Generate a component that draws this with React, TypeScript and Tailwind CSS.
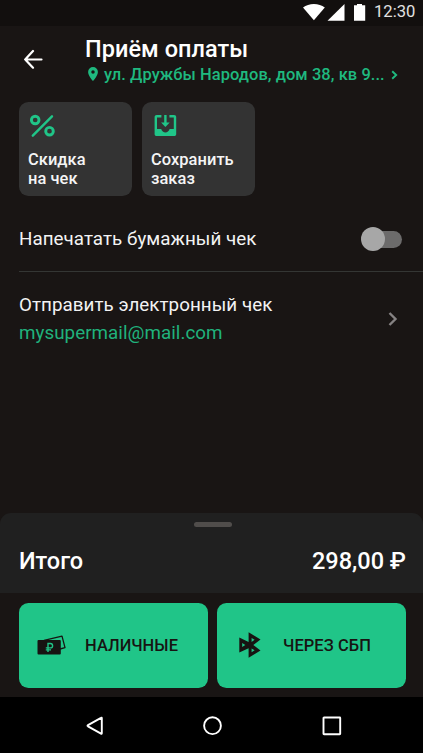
import type { ReactNode } from "react";

function StatusBar() {
    return (
        <div className="flex h-[26px] bg-[#120f0e] pl-[303px] pt-[3px]">
            <svg width="63" height="19" viewBox="0 0 63 19" fill="#fff" className="shrink-0">
                <path d="M0 4.500C3 2.200 6.700 1 10.900 1s7.900 1.200 10.900 3.500L10.900 17.300z" />
                <path d="M24.500 17.800H41.500V1z" />
                <path d="M51 2.300h3V1h5v1.300h3.200v15.500H51z" />
            </svg>
            <span className="ml-[8px] text-[16.600px] leading-[17px] text-[#e2e2e1]">12:30</span>
        </div>
    );
}

function Header() {
    return (
        <header className="flex h-[76px] pt-[10px]">
            <svg width="20" height="20" viewBox="0 0 20 20" fill="none" stroke="#fff" strokeWidth="2.200" strokeLinecap="round" strokeLinejoin="round" className="ml-[23px] mt-[13px] shrink-0">
                <path d="M10 2 2.200 10.500 10 18.700M2.200 10.500H18.500" />
            </svg>
            <div className="ml-[42px]">
                <h1 className="whitespace-nowrap text-[23.500px] font-medium leading-[27px] tracking-[0.040px] text-white">Приём оплаты</h1>
                <div className="flex h-[22px] items-center text-[#1fb97f]">
                    <svg width="10" height="14" viewBox="0 0 10 14" className="ml-[3px] shrink-0">
                        <path fill="currentColor" fillRule="evenodd" d="M5 0a4.900 4.900 0 0 0-4.900 4.900C.1 8.500 5 14 5 14s4.900-5.500 4.900-9.100A4.900 4.900 0 0 0 5 0zm0 3.200a1.750 1.750 0 1 1 0 3.500 1.750 1.750 0 0 1 0-3.500z" />
                    </svg>
                    <span className="ml-[6px] mt-[2px] whitespace-nowrap text-[16.450px] font-medium leading-[22px] tracking-[0.070px]">ул. Дружбы Народов, дом 38, кв 9...</span>
                    <svg width="7" height="10" viewBox="0 0 7 10" fill="none" stroke="currentColor" strokeWidth="1.900" className="ml-[6px] mt-[2px] shrink-0">
                        <path d="M1.200 1.200 5.200 5 1.200 8.800" />
                    </svg>
                </div>
            </div>
        </header>
    );
}

function ActionCard({ icon, children }: { icon: ReactNode; children: ReactNode }) {
    return (
        <button className="flex h-[94px] w-[113px] flex-col rounded-[9.400px] bg-[#333] pl-[9px] pt-[12px] text-left text-[16.450px] font-medium leading-[19px] tracking-[0.050px] text-[#f5f5f5]">
            {icon}
            <span className="mt-[10.500px]">{children}</span>
        </button>
    );
}

function PercentIcon() {
    return (
        <svg width="28" height="25" viewBox="0 0 28 25" fill="none" stroke="#20c588">
            <circle cx="7.200" cy="6" r="3.800" strokeWidth="2.900" />
            <circle cx="21.500" cy="17.200" r="3.800" strokeWidth="2.900" />
            <path d="M4.800 21.700 24 2.300" strokeWidth="2.400" strokeLinecap="round" />
        </svg>
    );
}

function SaveIcon() {
    return (
        <svg width="28" height="25" viewBox="0 0 28 25" fill="#20c588">
            <path fillRule="evenodd" d="M5.700 1H10.400V3.400H6V15H10.200C10.900 17 12.500 18.500 14.400 18.500S17.900 17 18.600 15H22.800V3.400H18.400V1H23.100C24.400 1 25.200 1.900 25.200 3.100V19.900C25.200 21.200 24.400 22 23.100 22H5.700C4.500 22 3.600 21.200 3.600 19.900V3.100C3.600 1.900 4.500 1 5.700 1z" />
            <path d="M13.200 1H15.600V8.400H18.700L14.400 12.900 10.100 8.400H13.200z" />
        </svg>
    );
}

function CashIcon() {
    return (
        <svg width="30" height="20" viewBox="0 0 30 20" className="shrink-0">
            <path d="M7 5.300 25 1.200 28 12.600 23 14" fill="none" stroke="#171412" strokeWidth="1.300" strokeLinejoin="round" />
            <rect x="0.500" y="5" width="23.300" height="14.500" rx="1" fill="#171412" />
            <path d="M11 17V8.500h2.400a2.200 2.200 0 0 1 0 4.400H8.800M8.800 14.900h5.200" fill="none" stroke="#20c588" strokeWidth="1.400" />
        </svg>
    );
}

function SbpIcon() {
    return (
        <svg width="22" height="26" viewBox="0 0 22 26" className="shrink-0">
            <path fill="#171412" fillRule="evenodd" d="M9.600.3 21.500 7.500 14.300 12.900 21.500 18.500 9.600 25.700V16.200L.3 20.600V5.400L9.600 9.900zM12.600 6.100V9.900L15.600 7.800zM12.600 16.400V20.200L15.600 18.200zM3.200 11V15L6.300 13z" />
        </svg>
    );
}

function PayButton({ icon, label, className }: { icon: ReactNode; label: string; className: string }) {
    return (
        <button className={`flex h-[85px] w-[189px] items-center rounded-[9.400px] bg-[#20c588] text-[16.450px] font-medium tracking-[0.080px] text-[#171412] ${className}`}>
            {icon}
            <span className="mt-[2px] whitespace-nowrap">{label}</span>
        </button>
    );
}

export default function App() {
    return (
        <main className="flex h-[753px] w-[423px] flex-col overflow-hidden bg-[#191514] font-[Roboto,sans-serif]">
            <StatusBar />
            <Header />

            <div className="flex gap-[10px] pl-[19px]">
                <ActionCard icon={<PercentIcon />}>
                    Скидка
                    <br />
                    на чек
                </ActionCard>
                <ActionCard icon={<SaveIcon />}>
                    Сохранить
                    <br />
                    заказ
                </ActionCard>
            </div>

            {/* Receipt options */}
            <section className="ml-[19px] flex-1 text-[18.800px] tracking-[0.040px] text-[#f3f3f3]">
                <div className="flex h-[76px] justify-between border-b border-[#343634] pr-[21px] pt-[31px]">
                    <span className="leading-[24px]">Напечатать бумажный чек</span>
                    <div className="relative mt-[4px] h-[17px] w-[36px] rounded-full bg-[#6c6b6b]">
                        <span className="absolute -left-[5px] -top-[4px] size-[24px] rounded-full bg-[#a7a7a7]" />
                    </div>
                </div>
                <div className="flex items-center justify-between pr-[25px] pt-[19px]">
                    <div className="leading-[28px]">
                        <p>Отправить электронный чек</p>
                        <p className="text-[#20b27c]">mysupermail@mail.com</p>
                    </div>
                    <svg width="10" height="14" viewBox="0 0 10 14" fill="none" stroke="#858283" strokeWidth="2.400">
                        <path d="M1.500 1 7.500 7 1.500 13" />
                    </svg>
                </div>
            </section>

            {/* Order total */}
            <section className="flex h-[80px] flex-col rounded-t-[11px] bg-[#202020] pt-[9px] text-[23.500px] font-medium text-white">
                <div className="ml-[193.500px] h-[5px] w-[38px] rounded-full bg-[#504d4b]" />
                <div className="mt-[19px] flex justify-between px-[19px] pr-[17px] leading-[30px]">
                    <span>Итого</span>
                    <span>298,00 ₽</span>
                </div>
            </section>

            <div className="flex h-[104px] gap-[9px] pl-[19px] pt-[9.500px]">
                <PayButton icon={<CashIcon />} label="НАЛИЧНЫЕ" className="gap-[18px] pl-[18px]" />
                <PayButton icon={<SbpIcon />} label="ЧЕРЕЗ СБП" className="gap-[22px] pl-[22px]" />
            </div>

            {/* System navigation */}
            <nav className="flex h-[56px] bg-black pl-[85px] pt-[19px]">
                <svg width="258" height="20" viewBox="0 0 258 20" fill="none" stroke="#fff" strokeWidth="1.900" strokeLinejoin="round">
                    <path d="M16.800 2.200V17.300Q16.800 18.200 16 17.700L3 10.300Q2 9.700 3 9.100L16 1.800Q16.800 1.300 16.800 2.200z" />
                    <circle cx="127.500" cy="9.700" r="8.400" />
                    <rect x="238.500" y="1.500" width="16.700" height="16.700" rx="0.500" />
                </svg>
            </nav>
        </main>
    );
}
